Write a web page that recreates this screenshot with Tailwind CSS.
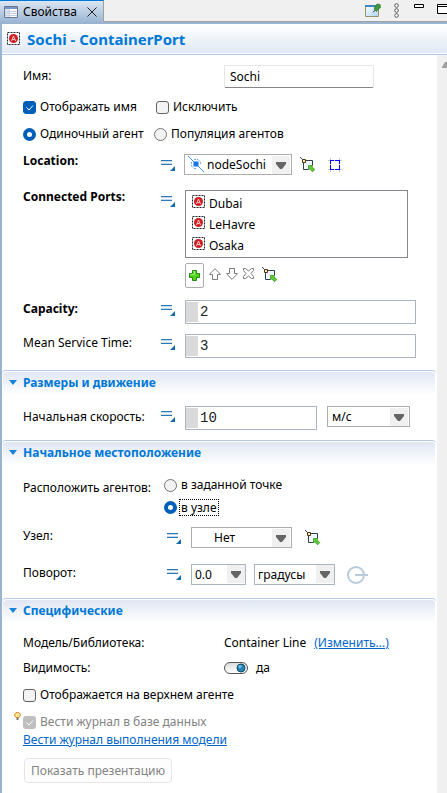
<!DOCTYPE html>
<html lang="ru">
<head>
<meta charset="utf-8">
<meta name="viewport" content="width=device-width, initial-scale=1">
<title>Свойства</title>
<script src="https://cdn.jsdelivr.net/npm/@tailwindcss/browser@4"></script>
</head>
<body class="flex h-screen flex-col overflow-hidden bg-white font-['Noto_Sans',sans-serif] text-[12px] leading-5 text-black">

<svg class="hidden" aria-hidden="true">
  <symbol id="agent" viewBox="0 0 13 13">
    <rect x=".5" y=".5" width="12" height="12" fill="#fff" stroke="#222" stroke-dasharray="2 1"/>
    <circle cx="6.5" cy="6.5" r="4.5" fill="#cf1f22"/>
    <path d="M4.5 9 6.5 4l2 5M5.3 7.5h2.4" fill="none" stroke="#f6c9c9"/>
  </symbol>
  <symbol id="menu" viewBox="0 0 14 14">
    <path d="M0 2.500h11M0 6.500h11" stroke="#2f78b5"/>
    <path d="M0 3.500h11M0 5.500h11" stroke="#c3d9ec"/>
    <path d="M14 8v5H9z" fill="#0f6cae"/>
  </symbol>
  <symbol id="pick" viewBox="0 0 16 16">
    <path d="M4.500 4.500h8v8h-8z" fill="#eef5fc"/>
    <path d="M12.500 8V3.500H3.500v9H8M0 0l3 3" fill="none" stroke="#2b3f4e"/>
    <path d="M2.500 2.500h3v3h-3z" fill="#ffe7ae" stroke="#4d3a1d"/>
    <path d="M8.500 8.500h4.500l-1.200 1.200 3 2.800-2.200 2.300-3-3-1.100 1.200z" fill="#5ccb32" stroke="#2b8d19" stroke-width=".7"/>
  </symbol>
  <symbol id="arrow" viewBox="0 0 18 18">
    <path d="M0 0h18v18H0z" fill="#f0f0f0"/>
    <path d="M4 6h10v2l-4 5H8L4 8z" fill="#656565"/>
  </symbol>
</svg>

<header class="flex h-[22px] shrink-0 items-stretch border-b border-[#a0a0a0] bg-[#f0f0f0]">
  <div class="-mb-px flex w-[104px] items-center border-t border-r border-t-[#0078d7] border-r-[#a0a0a0] bg-linear-to-b from-[#dce6f1] to-[#9bb6d4] pl-1">
    <svg class="size-[14px] shrink-0" viewBox="0 0 14 14" aria-hidden="true">
      <path d="M.5 1.500h13v11H.5z" fill="#fff" stroke="#6b7690"/>
      <path d="M1 2h12v2H1z" fill="#7595c9"/>
      <path d="M1 4h4v8H1z" fill="#dfe6f3"/>
      <path d="M5.500 4v8M1 6.500h12M1 8.500h12M1 10.500h12" stroke="#c5cfdf"/>
    </svg>
    <h2 class="ml-[5px] flex-1">Свойства</h2>
    <button class="mr-[6px]" aria-label="Закрыть">
      <svg class="size-[10px]" viewBox="0 0 10 10"><path d="M.5.5l9 9M9.500.5l-9 9" stroke="#222"/></svg>
    </button>
  </div>
  <div class="flex flex-1 items-start justify-end overflow-hidden pt-[3px]">
    <button aria-label="Закрепить">
      <svg class="h-[15px] w-4" viewBox="0 0 16 15">
        <defs><linearGradient id="w" x2="1" y2="1"><stop stop-color="#fff"/><stop offset="1" stop-color="#a9d5f3"/></linearGradient></defs>
        <path d="M.5 2.500h13v11H.5z" fill="url(#w)" stroke="#9a8f67"/>
        <path d="M0 2h11v2H0z" fill="#4285bd"/>
        <path d="M8 9.500 11 6" stroke="#333"/>
        <path d="M9.500 4.500 12 1l3 .5.500 3-3 2.500-1 1.500-2-2z" fill="#3e9a3c" stroke="#27722a" stroke-width=".7"/>
      </svg>
    </button>
    <button class="ml-[13px]" aria-label="Меню">
      <svg class="h-[15px] w-[5px]" viewBox="0 0 5 15" fill="#fff" stroke="#555"><circle cx="2.500" cy="2.500" r="1.800"/><circle cx="2.500" cy="7.500" r="1.800"/><circle cx="2.500" cy="12.500" r="1.800"/></svg>
    </button>
    <button class="ml-[15px]" aria-label="Свернуть">
      <svg class="h-[11px] w-[10px]" viewBox="0 0 10 11"><path d="M.5 1.500h9v3h-9z" fill="#fff" stroke="#000"/></svg>
    </button>
    <button class="-mr-px ml-[13px]" aria-label="Развернуть">
      <svg class="h-[11px] w-[11px]" viewBox="0 0 11 11"><path d="M.5 1.500h10v9H.5zM.5 3.500h10" fill="#fff" stroke="#000"/></svg>
    </button>
  </div>
</header>

<main class="flex min-h-0 flex-1 flex-col border-t-2 border-l-2 border-[#99b4d1]">
  <div class="flex h-[31px] shrink-0 items-center border-b border-[#b4c7e3] bg-linear-to-b from-white to-[#dfe8f5] pl-[5px] shadow-[inset_0_-1px_0_#fff]">
    <svg class="mb-px size-[13px]" aria-hidden="true"><use href="#agent"/></svg>
    <h1 class="ml-[7px] text-[15px] font-bold text-[#0078d7]">Sochi - ContainerPort</h1>
  </div>

  <div class="flex min-h-0 flex-1">
    <form class="min-w-0 flex-1 pr-px">
      <div class="pr-5 pl-[21px]">
        <div class="mt-[10px] flex h-[22px] items-center">
          <label for="name" class="w-[201px]">Имя:</label>
          <input id="name" value="Sochi" class="h-[23px] w-[150px] rounded-[2px] border border-[#e5e5e5] border-b-[#868686] px-[5px]">
        </div>

        <div class="mt-[10px] flex h-5 items-center">
          <label class="flex w-[133px] items-center gap-1 whitespace-nowrap">
            <span class="grid"><input type="checkbox" checked class="col-start-1 row-start-1 size-[13px] appearance-none rounded-[3px] border border-[#626262] bg-[#f3f3f3] checked:border-[#005fb8] checked:bg-[#005fb8]"><svg class="pointer-events-none col-start-1 row-start-1 size-[13px]" viewBox="0 0 13 13"><path d="M3.500 6.500 6 9l4-4.500" fill="none" stroke="#fff"/></svg></span>
            Отображать имя
          </label>
          <label class="flex items-center gap-1"><input type="checkbox" class="size-[13px] appearance-none rounded-[3px] border border-[#626262] bg-[#f3f3f3]">Исключить</label>
        </div>

        <div class="mt-[7px] flex h-5 items-center">
          <label class="flex w-[131px] items-center gap-1 whitespace-nowrap"><input type="radio" name="kind" checked class="size-[13px] appearance-none rounded-full border border-[#757575] bg-[#f3f3f3] checked:border-4 checked:border-[#005fb8] checked:bg-white">Одиночный агент</label>
          <label class="flex items-center gap-1"><input type="radio" name="kind" class="size-[13px] appearance-none rounded-full border border-[#757575] bg-[#f3f3f3] checked:border-4 checked:border-[#005fb8] checked:bg-white">Популяция агентов</label>
        </div>

        <div class="mt-[10px] flex h-[22px] items-start">
          <label for="location" class="-mt-[3px] w-[138px] font-bold">Location:</label>
          <button type="button" class="mt-1" aria-label="Режим"><svg class="size-[14px]"><use href="#menu"/></svg></button>
          <div class="relative ml-[9px] w-[108px]">
            <select id="location" class="h-[21px] w-full appearance-none border border-[#adadad] bg-white pl-[22px]"><option>nodeSochi</option></select>
            <svg class="pointer-events-none absolute top-[2px] left-1 size-4" viewBox="0 0 16 16" aria-hidden="true">
              <path d="M0 0l16 16" stroke="#3b93ea"/><path d="M5.500 5.500h5v5h-5z" fill="#1279e3"/>
              <path d="M6 3.500h4M3.500 6v4M12.500 6v3M6 12.500h3M10 3.500l2.500 2.500M3.500 10 6 12.500" fill="none" stroke="#69aef0" stroke-dasharray="2 1"/>
            </svg>
            <svg class="pointer-events-none absolute top-[2px] right-[2px] size-[18px]" aria-hidden="true"><use href="#arrow"/></svg>
          </div>
          <button type="button" class="mt-[3px] ml-2" aria-label="Выбрать на диаграмме"><svg class="size-4"><use href="#pick"/></svg></button>
          <button type="button" class="mt-1 ml-3" aria-label="Показать">
            <svg class="size-[14px]" viewBox="0 0 14 14"><path d="M0 2.500h14M0 11.500h14M2.500 0v14M11.500 0v14" stroke="#ccc"/><path d="M3 3h8v8H3z" fill="#fff"/><path d="M2 2.500h4M7 2.500h5M2 11.500h4M7 11.500h5M2.500 3v3M2.500 7v4M11.500 3v3M11.500 7v4" fill="none" stroke="#0000f5"/></svg>
          </button>
        </div>

        <div class="mt-[14px] flex items-start">
          <span id="ports" class="-mt-[3px] w-[138px] font-bold whitespace-nowrap">Connected Ports:</span>
          <button type="button" class="mt-1" aria-label="Режим"><svg class="size-[14px]"><use href="#menu"/></svg></button>
          <div class="mr-2 ml-[10px] flex-1">
            <ul aria-labelledby="ports" class="h-[68px] border border-[#828790] pt-[2px] pl-[6px] leading-[21px]">
              <li class="flex gap-1"><svg class="mt-[2px] size-[13px]" aria-hidden="true"><use href="#agent"/></svg>Dubai</li>
              <li class="flex gap-1"><svg class="mt-[2px] size-[13px]" aria-hidden="true"><use href="#agent"/></svg>LeHavre</li>
              <li class="flex gap-1"><svg class="mt-[2px] size-[13px]" aria-hidden="true"><use href="#agent"/></svg>Osaka</li>
            </ul>
            <div class="mt-[5px] flex h-[25px] items-start">
              <button type="button" aria-label="Добавить" class="grid h-[25px] w-[19px] place-items-center rounded-[2px] border border-[#adadad]">
                <svg class="size-[11px]" viewBox="0 0 11 11"><path d="M3.500.5h4v3h3v4h-3v3h-4v-3h-3v-4h3z" fill="#52d41c" stroke="#238b12"/><path d="M4.500 1.500h1v3h-4" fill="none" stroke="#a4ef80"/></svg>
              </button>
              <button type="button" aria-label="Вверх" class="mt-[5px] ml-[5px]"><svg class="size-3" viewBox="0 0 12 12"><path d="M6 .7 11.300 6v.5H8.500v5h-5v-5H.700V6z" fill="#fff" stroke="#7b7b7b"/></svg></button>
              <button type="button" aria-label="Вниз" class="mt-[5px] ml-[5px]"><svg class="size-3" viewBox="0 0 12 12"><path d="M6 11.300.700 6v-.5h2.800v-5h5v5h2.800V6z" fill="#fff" stroke="#7b7b7b"/></svg></button>
              <button type="button" aria-label="Удалить" class="mt-[5px] ml-[5px]"><svg class="size-[11px]" viewBox="0 0 11 11"><path d="M.5.5h2l3 2.500 3-2.500h2v2L8 5.500l2.500 3v2h-2L5.500 8l-3 2.500h-2v-2L3 5.500.500 2.500z" fill="#fff" stroke="#7b7b7b"/></svg></button>
              <button type="button" aria-label="Выбрать на диаграмме" class="mt-1 ml-2"><svg class="size-4"><use href="#pick"/></svg></button>
            </div>
          </div>
        </div>

        <div class="mt-3 flex h-6 items-start">
          <label for="capacity" class="-mt-px w-[138px] font-bold">Capacity:</label>
          <button type="button" class="mt-[3px]" aria-label="Режим"><svg class="size-[14px]"><use href="#menu"/></svg></button>
          <div class="ml-[10px] flex h-6 flex-1 border border-[#abb5c2] py-px">
            <span class="w-3 shrink-0 bg-[#d9d9d9]"></span>
            <input id="capacity" value="2" class="h-5 w-full min-w-0 pl-[2px] font-['Liberation_Mono',monospace] text-[14px] text-[#222] outline-none">
          </div>
        </div>
        <div class="mt-[10px] flex h-6 items-start">
          <label for="service" class="-mt-px w-[138px] whitespace-nowrap">Mean Service Time:</label>
          <button type="button" class="mt-[3px]" aria-label="Режим"><svg class="size-[14px]"><use href="#menu"/></svg></button>
          <div class="ml-[10px] flex h-6 flex-1 border border-[#abb5c2] py-px">
            <span class="w-3 shrink-0 bg-[#d9d9d9]"></span>
            <input id="service" value="3" class="h-5 w-full min-w-0 pl-[2px] font-['Liberation_Mono',monospace] text-[14px] text-[#222] outline-none">
          </div>
        </div>
      </div>

      <section>
        <h2 class="mt-3 flex h-[25px] items-center rounded-t-[4px] border-t border-[#b4c7e3] bg-linear-to-b from-[#dfe6f3] to-white pb-px font-bold text-[#0078d7] shadow-[inset_1px_1px_0_#fff,inset_-1px_1px_0_#fff]">
          <button type="button" class="flex items-center pl-[7px]"><svg class="mr-[6px] h-[5px] w-2" viewBox="0 0 8 5"><path d="M0 0h8L4 5z" fill="#1683d8"/></svg>Размеры и движение</button>
        </h2>
        <div class="mt-[11px] flex h-6 items-start pr-[26px] pl-[21px]">
          <label for="speed" class="mt-px w-[138px] whitespace-nowrap">Начальная скорость:</label>
          <button type="button" class="mt-[3px]" aria-label="Режим"><svg class="size-[14px]"><use href="#menu"/></svg></button>
          <div class="ml-[10px] flex h-6 flex-1 border border-[#abb5c2] py-px">
            <span class="w-3 shrink-0 bg-[#d9d9d9]"></span>
            <input id="speed" value="10" class="h-5 w-full min-w-0 pl-[2px] font-['Liberation_Mono',monospace] text-[14px] text-[#222] outline-none">
          </div>
          <div class="relative ml-[10px] w-[83px]">
            <select aria-label="Единицы скорости" class="h-[21px] w-full appearance-none border border-[#adadad] bg-white pl-1"><option>м/с</option></select>
            <svg class="pointer-events-none absolute top-[2px] right-[2px] size-[18px]" aria-hidden="true"><use href="#arrow"/></svg>
          </div>
        </div>
      </section>

      <section>
        <h2 class="mt-[10px] flex h-[25px] items-center rounded-t-[4px] border-t border-[#b4c7e3] bg-linear-to-b from-[#dfe6f3] to-white pb-px font-bold text-[#0078d7] shadow-[inset_1px_1px_0_#fff,inset_-1px_1px_0_#fff]">
          <button type="button" class="flex items-center pl-[7px]"><svg class="mr-[6px] h-[5px] w-2" viewBox="0 0 8 5"><path d="M0 0h8L4 5z" fill="#1683d8"/></svg>Начальное местоположение</button>
        </h2>
        <div class="pl-[21px]">
          <div class="mt-[10px] flex" role="radiogroup" aria-labelledby="place">
            <span id="place" class="mt-[3px] w-[141px] whitespace-nowrap">Расположить агентов:</span>
            <div class="flex flex-col gap-[2px]">
              <label class="flex h-5 items-center gap-1"><input type="radio" name="place" class="size-[13px] appearance-none rounded-full border border-[#757575] bg-[#f3f3f3] checked:border-4 checked:border-[#005fb8] checked:bg-white">в заданной точке</label>
              <label class="flex h-5 items-center gap-[2px]"><input type="radio" name="place" checked class="size-[13px] appearance-none rounded-full border border-[#757575] bg-[#f3f3f3] checked:border-4 checked:border-[#005fb8] checked:bg-white"><span class="border border-dotted border-black px-px leading-[15px]">в узле</span></label>
            </div>
          </div>
          <div class="mt-[10px] flex h-[22px] items-start">
            <label for="node" class="-mt-px w-[144px]">Узел:</label>
            <button type="button" class="mt-1" aria-label="Режим"><svg class="size-[14px]"><use href="#menu"/></svg></button>
            <div class="relative ml-[10px] w-[101px]">
              <select id="node" class="h-[21px] w-full appearance-none border border-[#adadad] bg-white pl-[22px]"><option>Нет</option></select>
              <svg class="pointer-events-none absolute top-[2px] right-[2px] size-[18px]" aria-hidden="true"><use href="#arrow"/></svg>
            </div>
            <button type="button" class="mt-[3px] ml-[13px]" aria-label="Выбрать на диаграмме"><svg class="size-4"><use href="#pick"/></svg></button>
          </div>
          <div class="mt-[15px] flex h-[22px] items-start">
            <label for="angle" class="-mt-px w-[144px]">Поворот:</label>
            <button type="button" class="mt-[3px]" aria-label="Режим"><svg class="size-[14px]"><use href="#menu"/></svg></button>
            <div class="relative ml-[10px] w-[55px]">
              <select id="angle" class="h-[21px] w-full appearance-none border border-[#abb5c2] bg-white pl-[3px]"><option>0.0</option></select>
              <svg class="pointer-events-none absolute top-px right-px size-[18px]" aria-hidden="true"><use href="#arrow"/></svg>
            </div>
            <div class="relative ml-2 w-[81px]">
              <select aria-label="Единицы угла" class="h-[21px] w-full appearance-none border border-[#abb5c2] bg-white pl-[3px]"><option>градусы</option></select>
              <svg class="pointer-events-none absolute top-px right-px size-[18px]" aria-hidden="true"><use href="#arrow"/></svg>
            </div>
            <svg class="mt-[2px] ml-3 h-[18px] w-[21px]" viewBox="0 0 21 18" fill="none" stroke="#b7cbdd" stroke-width="2" aria-hidden="true"><circle cx="9" cy="9" r="8"/><path d="M8 9h13"/></svg>
          </div>
        </div>
      </section>

      <section>
        <h2 class="mt-3 flex h-[25px] items-center rounded-t-[4px] border-t border-[#b4c7e3] bg-linear-to-b from-[#dfe6f3] to-white pb-px font-bold text-[#0078d7] shadow-[inset_1px_1px_0_#fff,inset_-1px_1px_0_#fff]">
          <button type="button" class="flex items-center pl-[7px]"><svg class="mr-[6px] h-[5px] w-2" viewBox="0 0 8 5"><path d="M0 0h8L4 5z" fill="#1683d8"/></svg>Специфические</button>
        </h2>
        <div class="pl-[21px]">
          <div class="mt-[10px] flex">
            <span class="w-[201px]">Модель/Библиотека:</span>
            <span>Container Line</span>
            <a href="#" class="ml-2 text-[#0066cc] underline">(Изменить...)</a>
          </div>
          <div class="mt-[5px] flex items-center">
            <label for="visible" class="w-[201px]">Видимость:</label>
            <span class="grid items-center">
              <input id="visible" type="checkbox" role="switch" checked class="col-start-1 row-start-1 h-3 w-6 appearance-none rounded-full border border-[#555] bg-linear-to-b from-[#ddd] to-white">
              <svg class="pointer-events-none col-start-1 row-start-1 h-3 w-6" viewBox="0 0 24 12"><circle cx="17" cy="6" r="4" fill="#2584b8" stroke="#174c6b"/><circle cx="16" cy="4.500" r="1.500" fill="#7cc4e4"/></svg>
            </span>
            <span class="ml-2">да</span>
          </div>
          <label class="mt-[7px] flex h-5 items-center gap-1"><input type="checkbox" class="size-[13px] appearance-none rounded-[3px] border border-[#626262] bg-[#f3f3f3]">Отображается на верхнем агенте</label>
          <label class="relative mt-[7px] flex h-5 items-center gap-1 text-[#838383]">
            <svg class="absolute top-0 -left-[9px] h-[9px] w-[7px]" viewBox="0 0 7 9" aria-hidden="true"><path d="M2 5.500.800 4V2L2 .700h3L6.200 2v2L5 5.500z" fill="#ffe6a0" stroke="#d98618"/><path d="M2.500 6h2v2h-2z" fill="#777"/></svg>
            <span class="grid"><input type="checkbox" checked disabled class="col-start-1 row-start-1 size-[13px] appearance-none rounded-[3px] bg-[#bfbfbf]"><svg class="pointer-events-none col-start-1 row-start-1 size-[13px]" viewBox="0 0 13 13"><path d="M3.500 6.500 6 9l4-4.500" fill="none" stroke="#fff"/></svg></span>
            Вести журнал в базе данных
          </label>
          <a href="#" class="-mt-[2px] block w-fit text-[#0066cc] underline">Вести журнал выполнения модели</a>
          <button type="button" disabled class="mt-2 ml-px h-[25px] rounded-[4px] border border-[#e5e5e5] bg-[#fdfdfd] px-[6px] text-[#838383]">Показать презентацию</button>
        </div>
      </section>
    </form>
    <div class="w-[10px] shrink-0 overflow-hidden bg-[#f0f0f0] pt-[7px] pl-[5px]" aria-hidden="true">
      <svg class="h-[6px] w-2" viewBox="0 0 8 6"><path d="M0 6V5l3-5h2l3 5v1z" fill="#a0a0a0"/></svg>
    </div>
  </div>
</main>
</body>
</html>
